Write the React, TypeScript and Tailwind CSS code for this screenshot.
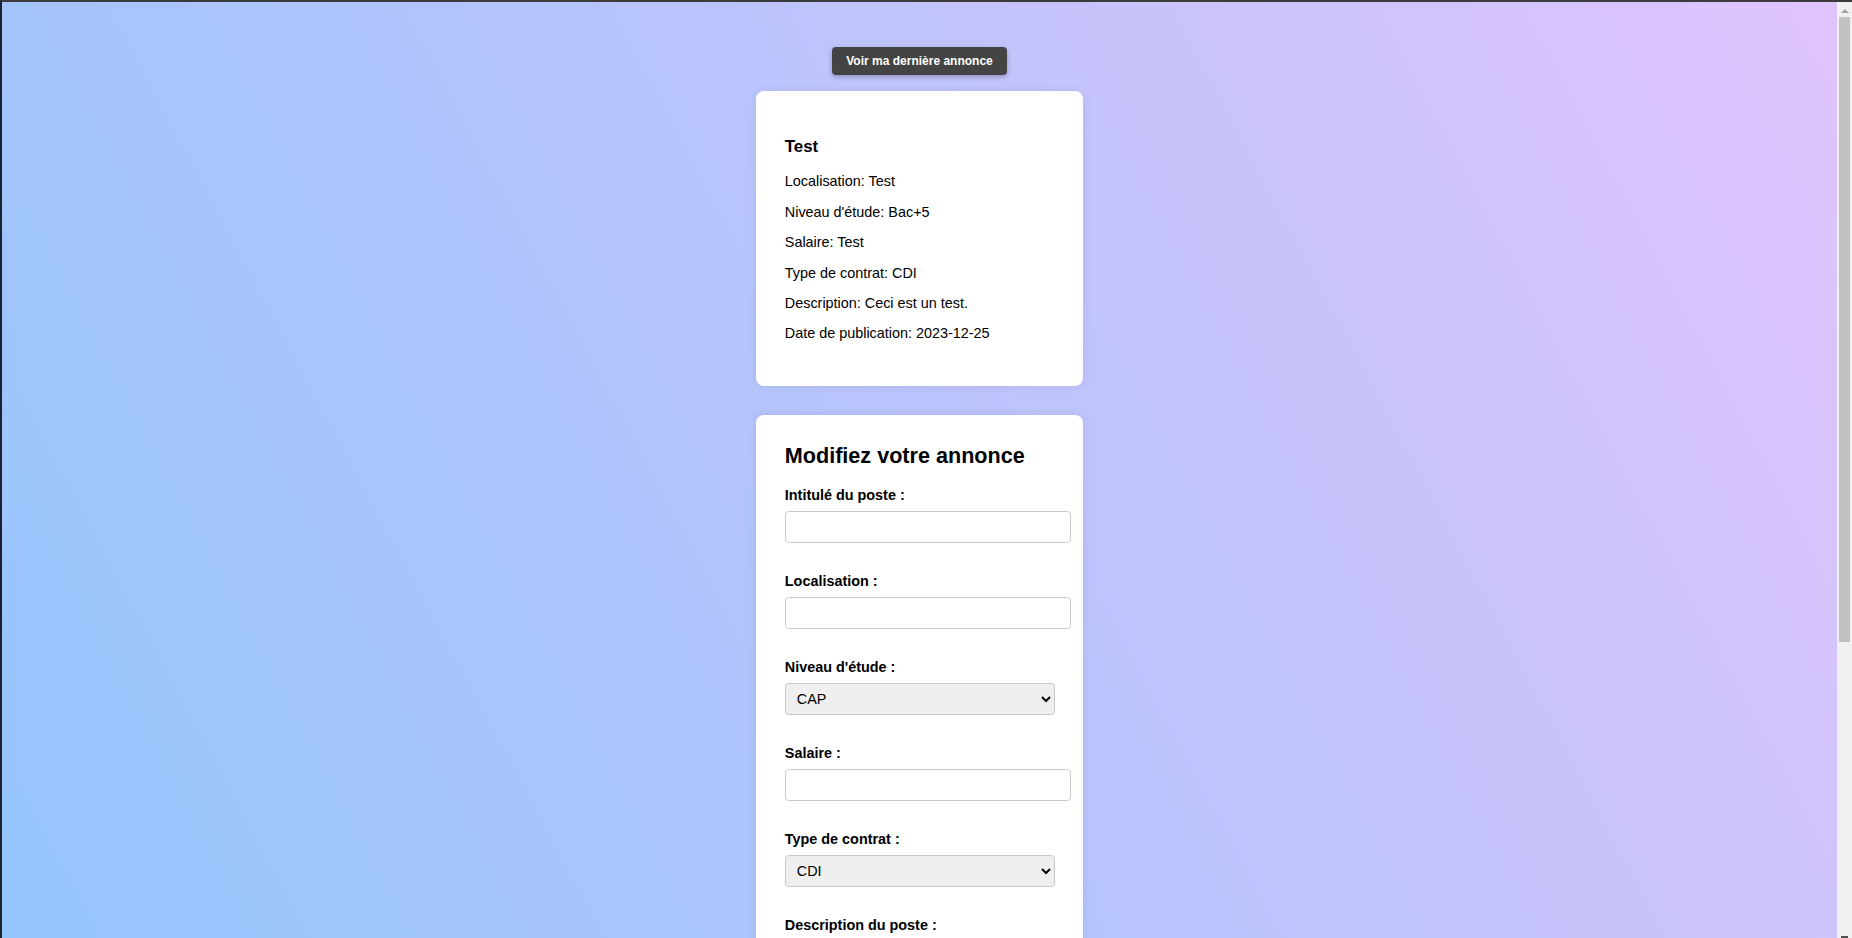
import React from "react";

const font = { fontFamily: '"Liberation Sans", Arial, sans-serif' };

function Field({ label, children }: { label: string; children: React.ReactNode }) {
  return (
    <div className="flex flex-col items-start">
      <label className="mb-[7.8px] block text-[14.4px] font-bold leading-[16.5px] text-black">{label}</label>
      {children}
    </div>
  );
}

const inputCls = "h-[32px] w-[286px] rounded-[3.6px] border border-[#c9c9c9] bg-white px-[7.2px] text-[14.4px]";
const selectCls = "h-[32px] w-[270px] rounded-[3.6px] border border-[#c9c9c9] bg-[#efefef] pl-[7px] text-[14.4px] text-black";

function Scrollbar() {
  return (
    <div className="sticky top-0 flex h-[936px] w-[15px] shrink-0 flex-col items-center bg-[#f1f1f1]">
      <div className="mt-[7px] h-0 w-0 border-x-[4px] border-b-[4px] border-x-transparent border-b-[#a3a3a3]" />
      <div className="mt-[4px] h-[625px] w-[11px] bg-[#c1c1c1]" />
      <div className="flex-1" />
      <div className="h-[2px] w-[7px] bg-[#505050]" />
    </div>
  );
}

export default function App() {
  const details = [
    ["Localisation", "Test"],
    ["Niveau d'étude", "Bac+5"],
    ["Salaire", "Test"],
    ["Type de contrat", "CDI"],
    ["Description", "Ceci est un test."],
    ["Date de publication", "2023-12-25"],
  ];

  return (
    <div
      style={font}
      className="flex min-h-screen border-t-2 border-l-2 border-t-[#3b3b3b] border-l-[#1b2130] bg-[linear-gradient(62deg,#8EC5FC_0%,#E0C3FC_100%)]"
    >
      <div className="flex flex-1 flex-col items-center pt-[45px] pb-[40px]">
        {/* bouton annonce */}
        <button className="rounded-[4px] bg-[#444444] px-[14.5px] py-[7px] text-[12px] font-bold leading-[14px] text-white shadow-[0_2px_5px_rgba(0,0,0,0.25)]">
          Voir ma dernière annonce
        </button>

        {/* dernière annonce */}
        <div className="mt-[16px] w-[327px] rounded-[8px] bg-white px-[28.8px] pt-[28.8px] pb-[29.5px] text-black shadow-[0_0_10px_rgba(0,0,0,0.08)]">
          <h3 className="mt-[16.85px] mb-[17.4px] text-[16.85px] font-bold leading-[19.4px]">Test</h3>
          <div className="flex flex-col gap-[13.9px]">
            {details.map(([k, v]) => (
              <p key={k} className="text-[14.4px] leading-[16.5px]">
                {k}: {v}
              </p>
            ))}
          </div>
          <div className="h-[14.4px]" />
        </div>

        {/* formulaire */}
        <div className="mt-[29px] w-[327px] rounded-[8px] bg-white p-[28.8px] text-black shadow-[0_0_10px_rgba(0,0,0,0.08)]">
          <h2 className="text-[21.6px] font-bold leading-[24.8px]">Modifiez votre annonce</h2>
          <form className="mt-[18.6px] flex flex-col gap-[29.7px]">
            <Field label="Intitulé du poste :">
              <input type="text" className={inputCls} />
            </Field>
            <Field label="Localisation :">
              <input type="text" className={inputCls} />
            </Field>
            <Field label="Niveau d'étude :">
              <select className={selectCls} defaultValue="CAP">
                <option>CAP</option>
                <option>Bac</option>
                <option>Bac+2</option>
                <option>Bac+3</option>
                <option>Bac+5</option>
              </select>
            </Field>
            <Field label="Salaire :">
              <input type="text" className={inputCls} />
            </Field>
            <Field label="Type de contrat :">
              <select className={selectCls} defaultValue="CDI">
                <option>CDI</option>
                <option>CDD</option>
                <option>Stage</option>
                <option>Alternance</option>
              </select>
            </Field>
            <Field label="Description du poste :">
              <textarea className="h-[90px] w-[286px] rounded-[3.6px] border border-[#c9c9c9] bg-white px-[7.2px] text-[14.4px]" />
            </Field>
            <Field label="Date de publication :">
              <input type="date" className={inputCls} />
            </Field>
            <button
              type="button"
              className="w-[286px] rounded-[4px] bg-[#444444] py-[9px] text-[14.4px] font-bold leading-[16.5px] text-white"
            >
              Modifier l'annonce
            </button>
          </form>
        </div>
      </div>
      <Scrollbar />
    </div>
  );
}
